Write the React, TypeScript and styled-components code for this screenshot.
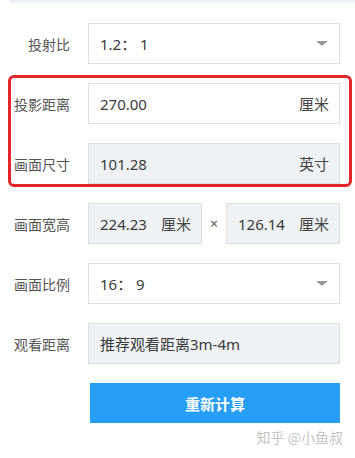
import styled, { createGlobalStyle } from "styled-components";

const GlobalStyle = createGlobalStyle`
  html, body {
    margin: 0;
    padding: 0;
    background: #fff;
  }
  body {
    font-family: "Noto Sans", "Noto Sans CJK SC", sans-serif;
  }
`;

export default function App() {
  return (
    <>
      <GlobalStyle />
      <Page>
        <TopStrip />
        <Form>
          <Row>
            <Label>投射比</Label>
            <Select>
              <Value>1.2： 1</Value>
              <Caret />
            </Select>
          </Row>

          <Highlighted>
            <Row>
              <Label>投影距离</Label>
              <Field>
                <Value>270.00</Value>
                <Unit>厘米</Unit>
              </Field>
            </Row>
            <Row>
              <Label>画面尺寸</Label>
              <Field $readonly>
                <Value>101.28</Value>
                <Unit>英寸</Unit>
              </Field>
            </Row>
            <Mark />
          </Highlighted>

          <Row>
            <Label>画面宽高</Label>
            <Pair>
              <Field $readonly>
                <Value>224.23</Value>
                <Unit>厘米</Unit>
              </Field>
              <Times>×</Times>
              <Field $readonly>
                <Value>126.14</Value>
                <Unit>厘米</Unit>
              </Field>
            </Pair>
          </Row>

          <Row>
            <Label>画面比例</Label>
            <Select>
              <Value>16： 9</Value>
              <Caret />
            </Select>
          </Row>

          <Row>
            <Label>观看距离</Label>
            <Field $readonly>
              <Value>推荐观看距离3m-4m</Value>
            </Field>
          </Row>

          <ButtonRow>
            <Button>重新计算</Button>
          </ButtonRow>
        </Form>
        <Watermark>知乎 @小鱼叔</Watermark>
      </Page>
    </>
  );
}

const Page = styled.div`
  position: relative;
  width: 355px;
  height: 458px;
  overflow: hidden;
  background: #fff;
`;

const TopStrip = styled.div`
  height: 3px;
  margin-left: 10px;
  background: #eef3f6;
  border-left: 1px solid #e2e6ea;
`;

const Form = styled.div`
  display: flex;
  flex-direction: column;
  gap: 19px;
  padding: 20px 15px 0 0;
`;

const Highlighted = styled.div`
  position: relative;
  display: flex;
  flex-direction: column;
  gap: 19px;
`;

const Mark = styled.div`
  position: absolute;
  top: -8px;
  left: 8px;
  right: -12px;
  bottom: -3px;
  border: 3px solid #e3262b;
  border-radius: 6px;
  pointer-events: none;
`;

const Row = styled.div`
  display: grid;
  grid-template-columns: 70px 252px;
  column-gap: 18px;
  align-items: center;
  height: 41px;
`;

const Label = styled.div`
  text-align: right;
  font-size: 14px;
  color: #555;
  white-space: nowrap;
`;

const Field = styled.div<{ $readonly?: boolean }>`
  box-sizing: border-box;
  display: flex;
  align-items: center;
  justify-content: space-between;
  height: 41px;
  padding: 0 10px 0 11px;
  background: ${(p) => (p.$readonly ? "#eef2f5" : "#fff")};
  border: 1px solid #dcdfe2;
  font-size: 15px;
  color: #3a3a3a;
  min-width: 0;
`;

const Select = styled(Field)`
  padding-right: 11px;
`;

const Value = styled.span`
  white-space: nowrap;
`;

const Unit = styled.span`
  font-size: 15px;
  color: #444;
  white-space: nowrap;
`;

const Caret = styled.span`
  width: 0;
  height: 0;
  border-left: 6px solid transparent;
  border-right: 6px solid transparent;
  border-top: 5px solid #999;
`;

const Pair = styled.div`
  display: flex;
  align-items: center;
  gap: 6px;

  & > ${Field} {
    flex: 1;
  }
`;

const Times = styled.span`
  width: 12px;
  text-align: center;
  font-size: 14px;
  color: #555;
`;

const ButtonRow = styled.div`
  display: flex;
  padding-left: 90px;
`;

const Button = styled.button`
  width: 250px;
  height: 40px;
  border: none;
  border-radius: 0;
  background: #279ef6;
  color: #fff;
  font-family: "Noto Sans CJK SC", sans-serif;
  font-size: 15px;
  font-weight: 700;
  cursor: pointer;
`;

const Watermark = styled.div`
  position: absolute;
  right: 12px;
  bottom: 11px;
  font-family: "Noto Sans CJK SC", sans-serif;
  font-size: 14px;
  color: #c4c4c4;
`;
